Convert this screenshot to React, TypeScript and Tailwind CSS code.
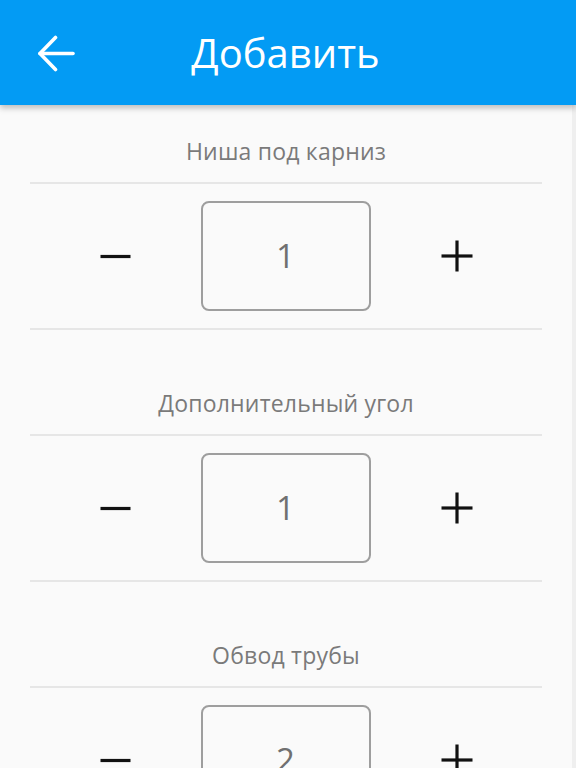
import { useState } from 'react'

const items = [
  { title: 'Ниша под карниз', value: 1 },
  { title: 'Дополнительный угол', value: 1 },
  { title: 'Обвод трубы', value: 2 },
]

function Counter({ title, value }: { title: string; value: number }) {
  const [count, setCount] = useState(value)
  return (
    <section className="flex flex-col">
      <h3 className="text-center text-[23px] leading-[28px] tracking-[0.2px] text-[#7a7a7a]">{title}</h3>
      <div className="mt-[17px] h-[2px] bg-[#e6e6e6]" />
      <div className="flex items-center justify-center gap-[70px] py-[17px]">
        <button onClick={() => setCount(count - 1)} className="w-[31px] h-[31px] flex items-center justify-center">
          <svg width="31" height="31" viewBox="0 0 31 31">
            <line x1="0.5" y1="15.5" x2="30.5" y2="15.5" stroke="#111" strokeWidth="3.2" />
          </svg>
        </button>
        <div className="w-[170px] h-[110px] rounded-[8px] border-2 border-[#9e9e9e] flex items-center justify-center text-[33px] text-[#707070]">
          {count}
        </div>
        <button onClick={() => setCount(count + 1)} className="w-[32px] h-[32px] flex items-center justify-center">
          <svg width="32" height="32" viewBox="0 0 32 32">
            <line x1="0.5" y1="16" x2="31.5" y2="16" stroke="#111" strokeWidth="3.2" />
            <line x1="16" y1="0.5" x2="16" y2="31.5" stroke="#111" strokeWidth="3.2" />
          </svg>
        </button>
      </div>
      <div className="h-[2px] bg-[#e6e6e6]" />
    </section>
  )
}

export default function App() {
  return (
    <div className="h-[768px] overflow-hidden bg-[#fafafa] font-['Open_Sans','Noto_Sans',sans-serif]">
      {/* App bar */}
      <header className="relative z-10 h-[105px] bg-[#039bf4] shadow-[0_3px_6px_rgba(0,0,0,0.25)] flex items-center">
        <button className="ml-[37px] w-[38px] h-[38px] flex items-center justify-center">
          <svg width="38" height="38" viewBox="0 0 38 38" fill="none" stroke="#fff" strokeWidth="3.6" strokeLinecap="round" strokeLinejoin="round">
            <path d="M3 19.5H36" />
            <path d="M18.5 3.5L3 19.5L18.5 35.5" />
          </svg>
        </button>
        <h1 className="flex-1 text-center pr-[80px] text-[40px] text-white leading-none">Добавить</h1>
      </header>

      <main className="flex flex-col gap-[59px] px-[30px] pt-[32px] border-r-[4px] border-[#efefef]">
        {items.map((item) => (
          <Counter key={item.title} title={item.title} value={item.value} />
        ))}
      </main>
    </div>
  )
}
